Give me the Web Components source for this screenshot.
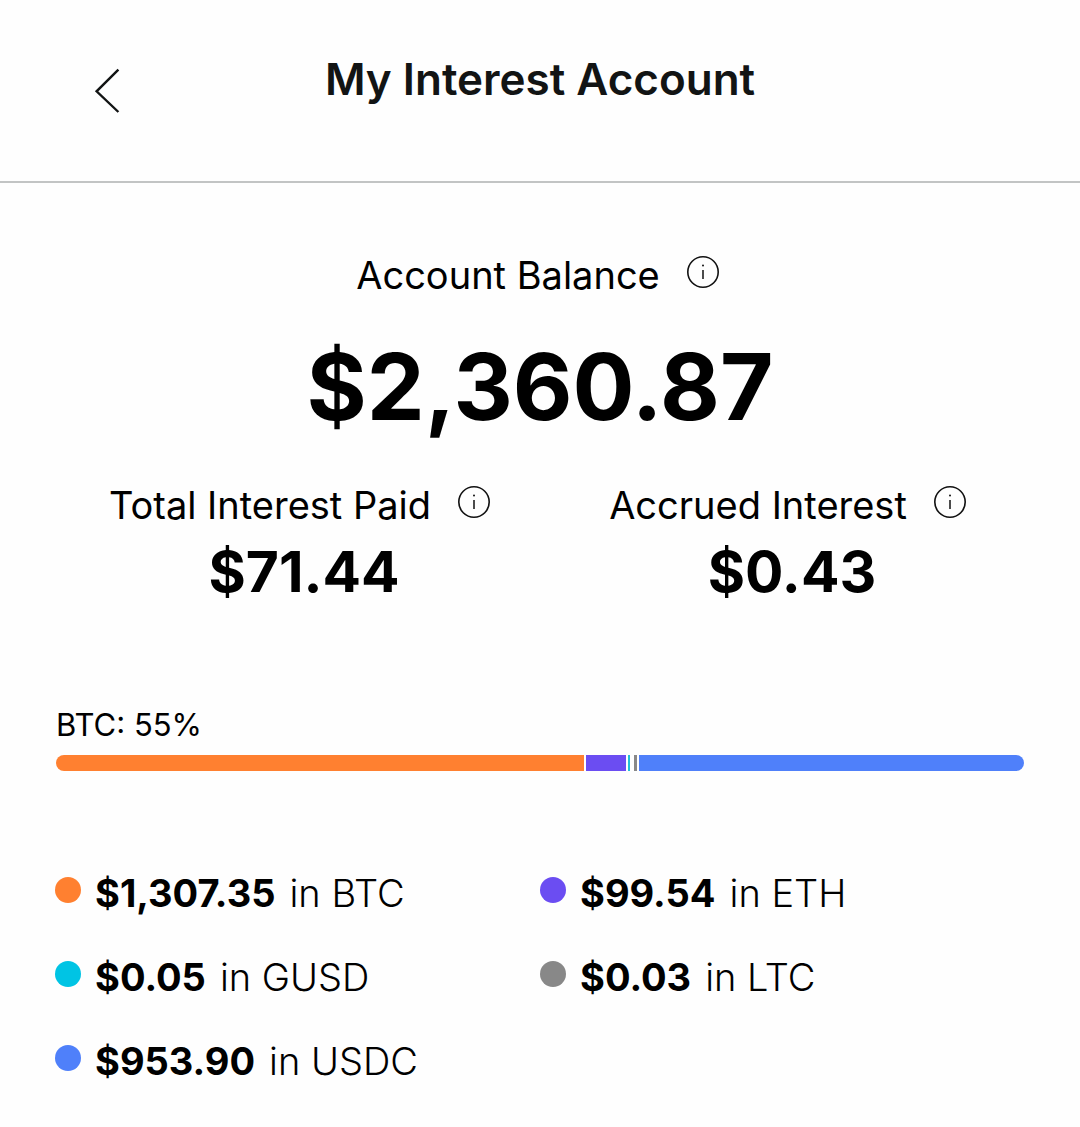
<!DOCTYPE html>
<html lang="en">
<head>
<meta charset="utf-8">
<meta name="viewport" content="width=device-width, initial-scale=1">
<title>My Interest Account</title>
<style>
    body{
        margin: 0;
        background-color: #fefefe;
        color: #000;
        font-family: Inter, "Liberation Sans", sans-serif;
    }
</style>
</head>
<body>
<interest-account></interest-account>

<script>
class AccountHeader extends HTMLElement{

    constructor(){
        super();
        this.attachShadow({ mode : "open"});
    }

    static get styles(){
        return `
            :host{
                display: block;
                border-bottom: 2px solid #c2c4c4;
            }

            header{
                display: grid;
                grid-template-columns: 80px 1fr 80px;
                align-items: start;
                padding: 51px 67px 50px;
            }

            button{
                display: flex;
                align-items: center;
                justify-content: center;
                width: 80px;
                height: 80px;
                padding: 0;
                border: 0;
                background: none;
                cursor: pointer;
            }

            h1{
                margin: 0;
                color: #121414;
                font-size: 44px;
                font-weight: 600;
                line-height: 56px;
                text-align: center;
            }
        `
    }

    connectedCallback(){
        this.shadowRoot.innerHTML = `
        <style>${AccountHeader.styles}</style>
        <header>
            <button type="button" aria-label="Back">
                <svg width="26" height="46" viewBox="0 0 26 46" fill="none" stroke="#121414" stroke-width="2.4">
                    <path d="M24.4 1.6 2.6 23.3 24.4 44"/>
                </svg>
            </button>
            <h1><slot></slot></h1>
        </header>
        `
    }
}

customElements.define("account-header", AccountHeader)


class InfoButton extends HTMLElement{

    constructor(){
        super();
        this.attachShadow({ mode : "open"});
    }

    static get styles(){
        return `
            :host{
                display: inline-flex;
            }

            button{
                display: flex;
                padding: 0;
                border: 0;
                background: none;
                cursor: pointer;
            }
        `
    }

    connectedCallback(){
        this.shadowRoot.innerHTML = `
        <style>${InfoButton.styles}</style>
        <button type="button" aria-label="More about ${this.getAttribute('topic')}">
            <svg width="34" height="34" viewBox="0 0 34 34" fill="none" stroke="#111">
                <circle cx="17" cy="17" r="15.2" stroke-width="1.6"/>
                <path d="M17 15v9" stroke-width="1.5"/>
                <circle cx="17" cy="10.4" r="1" fill="#111" stroke="none"/>
            </svg>
        </button>
        `
    }
}

customElements.define("info-button", InfoButton)


class AccountStat extends HTMLElement{

    constructor(){
        super();
        this.attachShadow({ mode : "open"});
    }

    static get styles(){
        return `
            :host{
                display: flex;
                flex-direction: column;
                align-items: center;
                gap: 7px;
            }

            :host([large]){
                gap: 32px;
            }

            .label{
                display: flex;
                align-items: flex-start;
                gap: 26px;
                font-size: 38px;
                line-height: 48px;
                white-space: nowrap;
            }

            :host([large]) .label{
                padding-right: 4px;
            }

            info-button{
                padding-top: 4px;
            }

            .amount{
                padding-left: 8px;
                font-size: 57px;
                font-weight: 700;
                line-height: 72px;
            }

            :host([large]) .amount{
                padding-left: 0;
                font-size: 92px;
                line-height: 112px;
            }
        `
    }

    connectedCallback(){
        const label = this.getAttribute('label')
        this.shadowRoot.innerHTML = `
        <style>${AccountStat.styles}</style>
        <div class="label">
            <span>${label}</span>
            <info-button topic="${label}"></info-button>
        </div>
        <div class="amount"><slot></slot></div>
        `
    }
}

customElements.define("account-stat", AccountStat)


class AllocationBar extends HTMLElement{

    constructor(){
        super();
        this.attachShadow({ mode : "open"});
    }

    static get styles(){
        return `
            :host{
                display: block;
            }

            .caption{
                font-size: 31px;
                line-height: 40px;
            }

            .bar{
                display: flex;
                gap: 2px;
                height: 16px;
                margin-top: 10px;
                border-radius: 8px;
                overflow: hidden;
            }

            .btc{ flex: 528 0 0; background-color: #ff8030; }
            .eth{ flex: 40 0 0; background-color: #6b4df2; }
            .gusd{ width: 2px; background-color: #1fc0d8; }
            .ltc{ width: 3px; margin-left: 2px; background-color: #888; }
            .usdc{ flex: 385 0 0; background-color: #4f80fa; }
        `
    }

    connectedCallback(){
        this.shadowRoot.innerHTML = `
        <style>${AllocationBar.styles}</style>
        <div class="caption"><slot></slot></div>
        <div class="bar">
            <div class="btc"></div>
            <div class="eth"></div>
            <div class="gusd"></div>
            <div class="ltc"></div>
            <div class="usdc"></div>
        </div>
        `
    }
}

customElements.define("allocation-bar", AllocationBar)


class CoinBalance extends HTMLElement{

    constructor(){
        super();
        this.attachShadow({ mode : "open"});
    }

    static get styles(){
        return `
            :host{
                display: flex;
                align-items: flex-start;
                gap: 14px;
                font-size: 38px;
                line-height: 48px;
                white-space: nowrap;
            }

            .dot{
                width: 26px;
                height: 26px;
                margin-top: 8px;
                border-radius: 50%;
                background-color: var(--coin);
            }

            .amount{
                font-weight: 700;
            }

            .coin{
                font-weight: 300;
            }
        `
    }

    connectedCallback(){
        this.shadowRoot.innerHTML = `
        <style>${CoinBalance.styles}</style>
        <div class="dot"></div>
        <div class="amount"><slot></slot></div>
        <div class="coin">in ${this.getAttribute('coin')}</div>
        `
    }
}

customElements.define("coin-balance", CoinBalance)


class InterestAccount extends HTMLElement{

    constructor(){
        super();
        this.attachShadow({ mode : "open"});
    }

    static get styles(){
        return `
            :host{
                display: block;
            }

            main{
                padding: 68px 0 40px;
            }

            .interest{
                display: grid;
                grid-template-columns: 1fr 1fr;
                margin-top: 38px;
                padding: 0 48px 0 56px;
            }

            allocation-bar{
                margin: 97px 56px 0;
            }

            .coins{
                display: grid;
                grid-template-columns: 1fr 1fr;
                row-gap: 36px;
                margin-top: 98px;
                padding: 0 55px;
            }
        `
    }

    connectedCallback(){
        this.shadowRoot.innerHTML = `
        <style>${InterestAccount.styles}</style>
        <account-header>My Interest Account</account-header>
        <main>
            <account-stat large label="Account Balance">$2,360.87</account-stat>
            <div class="interest">
                <account-stat label="Total Interest Paid">$71.44</account-stat>
                <account-stat label="Accrued Interest">$0.43</account-stat>
            </div>
            <allocation-bar>BTC: 55%</allocation-bar>
            <div class="coins">
                <coin-balance coin="BTC" style="--coin: #ff8030">$1,307.35</coin-balance>
                <coin-balance coin="ETH" style="--coin: #6b4df2">$99.54</coin-balance>
                <coin-balance coin="GUSD" style="--coin: #00c4e4">$0.05</coin-balance>
                <coin-balance coin="LTC" style="--coin: #888">$0.03</coin-balance>
                <coin-balance coin="USDC" style="--coin: #4f80fa">$953.90</coin-balance>
            </div>
        </main>
        `
    }
}

customElements.define("interest-account", InterestAccount)
</script>
</body>
</html>
